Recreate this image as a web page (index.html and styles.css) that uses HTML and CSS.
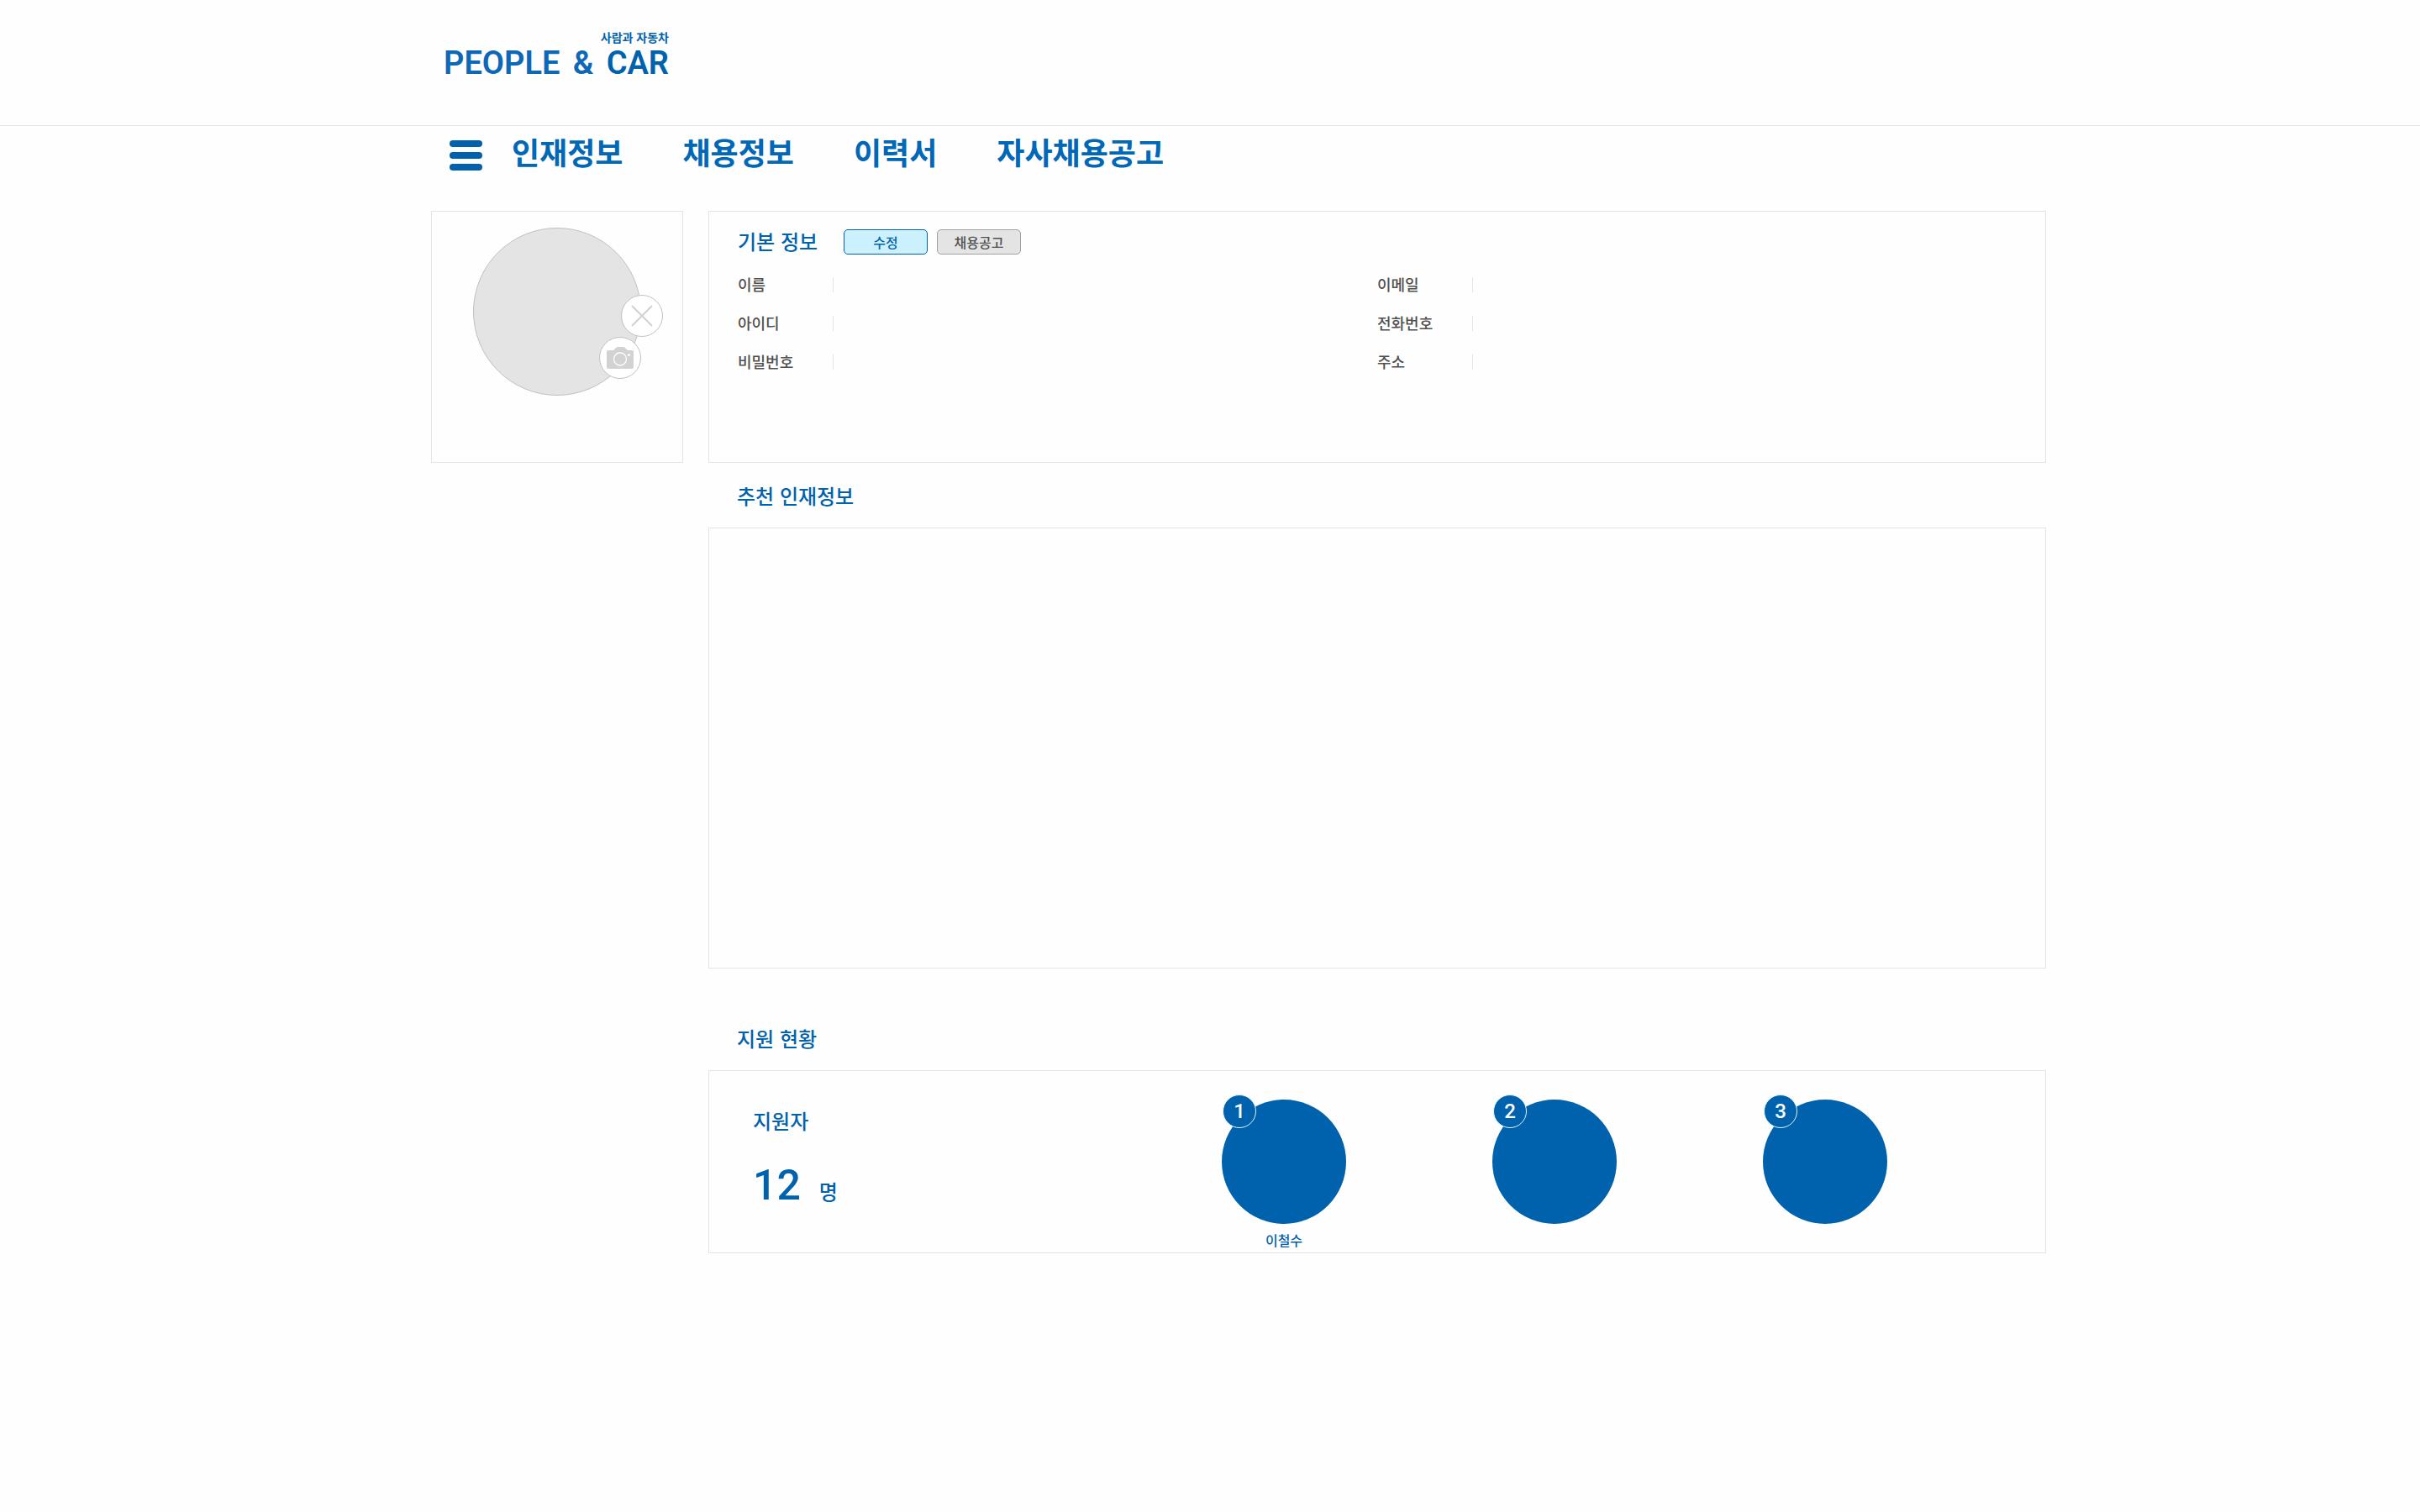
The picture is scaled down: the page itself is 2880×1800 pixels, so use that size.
FILE: index.html
```html
<!DOCTYPE html>
<html lang="ko">
<head>
  <meta charset="utf-8">
  <meta name="viewport" content="width=device-width, initial-scale=1">
  <title>PEOPLE &amp; CAR</title>
  <link rel="stylesheet" href="styles.css">
</head>
<body>
  <header class="header">
    <a class="logo" href="#">
      <span class="logo-tagline">사람과 자동차</span>
      <span class="logo-name"><span>PEOPLE</span><span>&amp;</span><span class="logo-car">CAR</span></span>
    </a>
  </header>

  <nav class="nav">
    <button class="menu-button" type="button" aria-label="메뉴">
      <span class="menu-bar"></span>
      <span class="menu-bar"></span>
      <span class="menu-bar"></span>
    </button>
    <a href="#">인재정보</a>
    <a href="#">채용정보</a>
    <a href="#">이력서</a>
    <a href="#">자사채용공고</a>
  </nav>

  <main class="page">
    <aside class="card photo-card">
      <div class="photo">
        <button class="photo-button photo-remove" type="button" aria-label="사진 삭제">
          <svg width="26" height="26" viewBox="0 0 26 26" fill="none" stroke="#d2d2d2" stroke-width="2"><path d="M1 1l24 24M25 1L1 25"/></svg>
        </button>
        <button class="photo-button photo-upload" type="button" aria-label="사진 등록">
          <svg width="32" height="26" viewBox="0 0 32 26">
            <path fill="#d2d2d2" d="M2 4h6l3-3q1-1 3-1h5q2 0 3 1l3 3h5q2 0 2 2v18q0 2-2 2H2q-2 0-2-2V6q0-2 2-2z"/>
            <circle cx="16" cy="14.500" r="7.500" fill="none" stroke="#fff" stroke-width="1.300"/>
            <circle cx="26.500" cy="9.500" r="1.500" fill="#fff"/>
          </svg>
        </button>
      </div>
    </aside>

    <div class="content">
      <section class="card profile">
        <div class="profile-head">
          <h2 class="title">기본 정보</h2>
          <button class="button button-primary" type="button">수정</button>
          <button class="button" type="button">채용공고</button>
        </div>
        <dl class="fields">
          <div class="field"><dt>이름</dt><dd></dd></div>
          <div class="field"><dt>이메일</dt><dd></dd></div>
          <div class="field"><dt>아이디</dt><dd></dd></div>
          <div class="field"><dt>전화번호</dt><dd></dd></div>
          <div class="field"><dt>비밀번호</dt><dd></dd></div>
          <div class="field"><dt>주소</dt><dd></dd></div>
        </dl>
      </section>

      <section class="section">
        <h2 class="title section-title">추천 인재정보</h2>
        <div class="card talent"></div>
      </section>

      <section class="section section-status">
        <h2 class="title section-title">지원 현황</h2>
        <div class="card status">
          <div class="total">
            <h3 class="title">지원자</h3>
            <p class="total-count"><strong>12</strong><span>명</span></p>
          </div>
          <ol class="ranking">
            <li><div class="person"><span class="rank">1</span></div><span class="person-name">이철수</span></li>
            <li><div class="person"><span class="rank">2</span></div></li>
            <li><div class="person"><span class="rank">3</span></div></li>
          </ol>
        </div>
      </section>
    </div>
  </main>
</body>
</html>
```
FILE: styles.css
```css
:root {
  --blue: #0062ad;
  --nav-blue: #0068b7;
  --line: #e4e4e4;
  --start: 513px;
  --end: 445px;
}

* {
  box-sizing: border-box;
  margin: 0;
  padding: 0;
}

body {
  background: #fefefe;
  color: #505050;
  font-family: "Noto Sans CJK KR", sans-serif;
  font-size: 18px;
  font-weight: 500;
}

a {
  color: inherit;
  text-decoration: none;
}

button {
  font: inherit;
  cursor: pointer;
}

ol {
  list-style: none;
}

.header {
  padding: 35px var(--end) 51px 528px;
  border-bottom: 1px solid var(--line);
}

.logo {
  display: flex;
  flex-direction: column;
  width: 268px;
  color: var(--blue);
}

.logo-tagline {
  align-self: flex-end;
  font-size: 14px;
  font-weight: 700;
  line-height: 18px;
}

.logo-name {
  display: flex;
  justify-content: space-between;
  color: #0f68b6;
  font-family: Roboto, sans-serif;
  font-size: 38px;
  font-weight: 600;
  line-height: 45px;
}

.logo-car {
  color: var(--blue);
}

.nav {
  display: flex;
  align-items: center;
  gap: 71px;
  padding: 7px var(--end) 0 535px;
  color: var(--nav-blue);
  font-size: 36px;
  font-weight: 700;
  line-height: 44px;
}

.menu-button {
  display: flex;
  flex-direction: column;
  gap: 6px;
  width: 39px;
  margin-top: 10px;
  margin-right: -36px;
  border: 0;
  background: none;
}

.menu-bar {
  width: 100%;
  height: 8px;
  border-radius: 4px;
  background: var(--blue);
}

.page {
  display: grid;
  grid-template-columns: 300px minmax(0, 1fr);
  align-items: start;
  gap: 30px;
  padding: 48px var(--end) 60px var(--start);
}

.card {
  border: 1px solid var(--line);
}

.photo-card {
  display: flex;
  justify-content: center;
  min-height: 300px;
  padding: 19px 0;
}

.photo {
  position: relative;
  width: 200px;
  height: 200px;
  border: 1px solid #c0c0c0;
  border-radius: 50%;
  background: var(--line);
}

.photo-button {
  position: absolute;
  display: grid;
  place-items: center;
  width: 50px;
  height: 50px;
  border: 1px solid #c0c0c0;
  border-radius: 50%;
  background: #fff;
}

.photo-remove {
  top: 79px;
  left: 175px;
}

.photo-upload {
  top: 129px;
  left: 149px;
}

.title {
  color: var(--blue);
  font-size: 24px;
  font-weight: 500;
  line-height: 28px;
}

.profile {
  min-height: 300px;
  padding: 21px 34px;
}

.profile-head {
  display: flex;
  align-items: flex-start;
  gap: 11px;
}

.profile-head .title {
  min-width: 115px;
}

.button {
  width: 100px;
  height: 30px;
  border: 1px solid #a0a0a0;
  border-radius: 5px;
  background: var(--line);
  color: #505050;
  font-size: 16px;
  line-height: 26px;
}

.button-primary {
  border-color: var(--blue);
  background: #cdf0fe;
  color: var(--blue);
}

.fields {
  display: grid;
  grid-template-columns: 1fr 1fr;
  row-gap: 28px;
  margin-top: 27px;
}

.field {
  display: flex;
  height: 18px;
  line-height: 16px;
}

.field dt {
  width: 113px;
}

.field dd {
  flex: 1;
  border-left: 1px solid var(--line);
}

.section-title {
  padding: 25px 34px 24px;
}

.talent {
  min-height: 525px;
}

.section-status {
  margin-top: 44px;
}

.status {
  display: flex;
  justify-content: space-between;
  min-height: 218px;
  padding: 34px 101px 0 52px;
}

.total {
  padding-top: 11px;
}

.total-count {
  display: flex;
  align-items: baseline;
  gap: 22px;
  margin-top: 38px;
  color: var(--blue);
  font-size: 24px;
  line-height: 50px;
}

.total-count strong {
  font-family: Roboto, sans-serif;
  font-size: 50px;
  font-weight: 500;
}

.ranking {
  display: grid;
  grid-template-columns: repeat(3, 322px);
}

.ranking li {
  display: flex;
  flex-direction: column;
  align-items: center;
}

.person {
  position: relative;
  width: 148px;
  height: 148px;
  border-radius: 50%;
  background: var(--blue);
}

.rank {
  position: absolute;
  top: -6px;
  left: 1px;
  width: 40px;
  height: 40px;
  border: 1px solid #e4f6ff;
  border-radius: 50%;
  background: var(--blue);
  color: #fff;
  font-family: Roboto, sans-serif;
  font-size: 24px;
  line-height: 38px;
  text-align: center;
}

.person-name {
  margin-top: 8px;
  color: var(--blue);
  font-size: 16px;
  line-height: 22px;
}
```
